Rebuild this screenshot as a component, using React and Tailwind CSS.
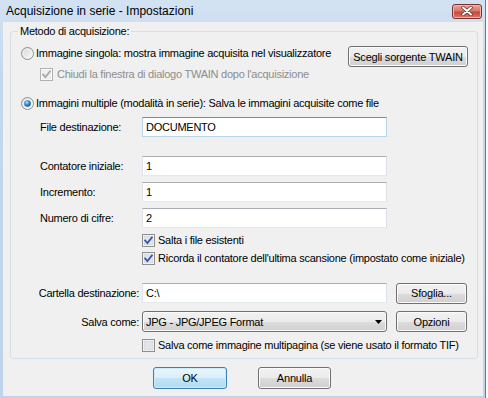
import React from 'react';

const font = "font-['Liberation_Sans',Arial,sans-serif]";

const Radio = ({ checked }) => (
  <svg width="13" height="13" viewBox="0 0 13 13" className="shrink-0">
    <defs>
      <linearGradient id={checked ? 'rg1' : 'rg0'} x1="0" y1="0" x2="1" y2="1">
        <stop offset="0" stopColor="#d6d6d6" />
        <stop offset="1" stopColor="#fbfbfb" />
      </linearGradient>
      <radialGradient id="rdot" cx="0.4" cy="0.35" r="0.7">
        <stop offset="0" stopColor="#b8e6ff" />
        <stop offset="0.5" stopColor="#2d8fd5" />
        <stop offset="1" stopColor="#0d4a82" />
      </radialGradient>
    </defs>
    <circle cx="6.5" cy="6.5" r="6" fill={`url(#${checked ? 'rg1' : 'rg0'})`} stroke="#8e8f8f" />
    <circle cx="6.5" cy="6.5" r="4.5" fill="none" stroke="#f4f4f4" strokeWidth="0.8" />
    {checked && <circle cx="6.5" cy="6.5" r="3.3" fill="url(#rdot)" />}
  </svg>
);

const Check = ({ checked, disabled }) => (
  <svg width="13" height="13" viewBox="0 0 13 13" className="shrink-0">
    <rect x="0.5" y="0.5" width="12" height="12" fill="#ffffff" stroke={disabled ? '#b1b1b1' : '#8e8f8f'} />
    <rect x="2" y="2" width="9" height="9" fill={disabled ? '#f0f0f0' : '#e2e4e8'} stroke={disabled ? '#e6e6e6' : '#c9ccd2'} strokeWidth="0.6" />
    {checked && (
      <path
        d="M3.2 6.6 L5.4 9 L9.9 3.4"
        fill="none"
        stroke={disabled ? '#a7a7a7' : '#3a55a0'}
        strokeWidth="1.8"
        strokeLinecap="square"
      />
    )}
  </svg>
);

const Button = ({ children, className = '', primary }) => (
  <button
    type="button"
    className={`${className} flex shrink-0 items-center justify-center rounded-[3px] border text-[11px] tracking-[-0.2px] text-black ${
      primary
        ? 'border-[#3c7fb1] bg-[linear-gradient(#e9f5fc,#d9effb_50%,#c3e4f7_50%,#b3dbf2)] shadow-[inset_0_0_0_1px_#cfeafa]'
        : 'border-[#707070] bg-[linear-gradient(#f2f2f2,#ebebeb_50%,#dddddd_50%,#cfcfcf)] shadow-[inset_0_0_0_1px_#fbfbfb]'
    }`}
  >
    {children}
  </button>
);

const TextBox = ({ value, focused }) => (
  <div
    className={`flex h-[20px] w-[245px] items-center border bg-white pl-[3px] text-[11px] ${
      focused
        ? 'border-[#b7d5ea] border-t-[#5794bf]'
        : 'border-[#e3e9ef] border-l-[#e2e3ea] border-r-[#dbdfe6] border-t-[#abadb3]'
    }`}
  >
    {value}
  </div>
);

// label column is 102px wide; right-aligned labels may spill to the left
const LabelRow = ({ label, children, right, className = '' }) => (
  <div className={`flex h-[20px] items-center pl-[29px] ${className}`}>
    <div className={`flex w-[102px] shrink-0 whitespace-nowrap ${right ? 'justify-end pr-[3px]' : ''}`}>{label}</div>
    {children}
  </div>
);

const CheckRow = ({ children, checked, className = '' }) => (
  <div className={`flex h-[14px] items-center gap-[3px] pl-[131px] ${className}`}>
    <Check checked={checked} />
    <span>{children}</span>
  </div>
);

export default function App() {
  return (
    <div className={`h-[398px] w-[488px] overflow-hidden bg-[#f6f8fb] ${font}`}>
      <div className="flex h-[398px] w-[486px] flex-col border-r border-[#5f7ea5] bg-[linear-gradient(#d3e2f3,#c3d7ed_20%,#bfd4eb)]">
        {/* title bar */}
        <div className="flex h-[22px] shrink-0 items-center justify-between pl-[6px] pr-[3px]">
          <span className="text-[12px] leading-none text-black">Acquisizione in serie - Impostazioni</span>
          <div className="flex h-[15px] w-[30px] items-center justify-center rounded-[3px] border border-[#7a2f2a] bg-[linear-gradient(#e8a79e,#d8766a_45%,#c44b3c_55%,#d8786a)] shadow-[inset_0_0_0_1px_#f0b8b0]">
            <svg width="12" height="10" viewBox="0 0 12 10">
              <path d="M2 1.5 L10 8.5 M10 1.5 L2 8.5" stroke="#6b2a26" strokeWidth="3.4" strokeLinecap="round" />
              <path d="M2 1.5 L10 8.5 M10 1.5 L2 8.5" stroke="#ffffff" strokeWidth="2" strokeLinecap="round" />
            </svg>
          </div>
        </div>

        {/* client area */}
        <div className="mb-[2px] ml-[3px] mr-[2px] flex-1 bg-[#f0f0f0] pl-[7px] pt-[2px] text-[11px] leading-[14px] tracking-[-0.25px] text-black">
          <fieldset className="w-[468px] rounded-[3px] border border-[#d5dfe5] pb-[6px]">
            <legend className="ml-[7px] px-[2px] leading-[14px]">Metodo di acquisizione:</legend>

            <div className="mt-[8px] flex items-start justify-between pr-[9px]">
              <div>
                <div className="flex h-[14px] items-center gap-[2px] pl-[10px]">
                  <Radio />
                  <span>Immagine singola: mostra immagine acquisita nel visualizzatore</span>
                </div>
                <div className="mt-[7px] flex h-[14px] items-center gap-[4px] pl-[29px]">
                  <Check checked disabled />
                  <span className="text-[#8d8d8d]">Chiudi la finestra di dialogo TWAIN dopo l'acquisizione</span>
                </div>
              </div>
              <Button className="h-[21px] w-[120px]">Scegli sorgente TWAIN</Button>
            </div>

            <div className="mt-[15px] flex h-[14px] items-center gap-[2px] pl-[10px]">
              <Radio checked />
              <span>Immagini multiple (modalità in serie): Salva le immagini acquisite come file</span>
            </div>

            <LabelRow label="File destinazione:" className="mt-[7px]">
              <TextBox value="DOCUMENTO" focused />
            </LabelRow>
            <div className="mt-[19px] flex flex-col gap-[6px]">
              <LabelRow label="Contatore iniziale:">
                <TextBox value="1" />
              </LabelRow>
              <LabelRow label="Incremento:">
                <TextBox value="1" />
              </LabelRow>
              <LabelRow label="Numero di cifre:">
                <TextBox value="2" />
              </LabelRow>
            </div>

            <CheckRow checked className="mt-[5px]">Salta i file esistenti</CheckRow>
            <CheckRow checked className="mt-[4px]">
              Ricorda il contatore dell'ultima scansione (impostato come iniziale)
            </CheckRow>

            <LabelRow label="Cartella destinazione:" right className="mt-[18px]">
              <TextBox value="C:\" />
              <Button className="ml-[9px] h-[21px] w-[71px]">Sfoglia...</Button>
            </LabelRow>
            <div className="mt-[8px] flex h-[21px] items-center pl-[29px]">
              <div className="flex w-[102px] shrink-0 justify-end whitespace-nowrap pr-[3px]">Salva come:</div>
              <div className="flex h-[21px] w-[245px] items-center justify-between rounded-[3px] border border-[#707070] bg-[linear-gradient(#f2f2f2,#ebebeb_50%,#dddddd_50%,#cfcfcf)] pl-[3px] pr-[4px] shadow-[inset_0_0_0_1px_#fbfbfb]">
                <span>JPG - JPG/JPEG Format</span>
                <svg width="7" height="4" viewBox="0 0 7 4">
                  <path d="M0 0 H7 L3.5 4 Z" fill="#000000" />
                </svg>
              </div>
              <Button className="ml-[9px] h-[21px] w-[71px]">Opzioni</Button>
            </div>

            <CheckRow className="mt-[6px]">
              Salva come immagine multipagina (se viene usato il formato TIF)
            </CheckRow>
          </fieldset>

          <div className="mt-[8px] flex gap-[31px] pl-[143px]">
            <Button primary className="h-[22px] w-[74px]">OK</Button>
            <Button className="h-[22px] w-[73px]">Annulla</Button>
          </div>
        </div>
      </div>
    </div>
  );
}
